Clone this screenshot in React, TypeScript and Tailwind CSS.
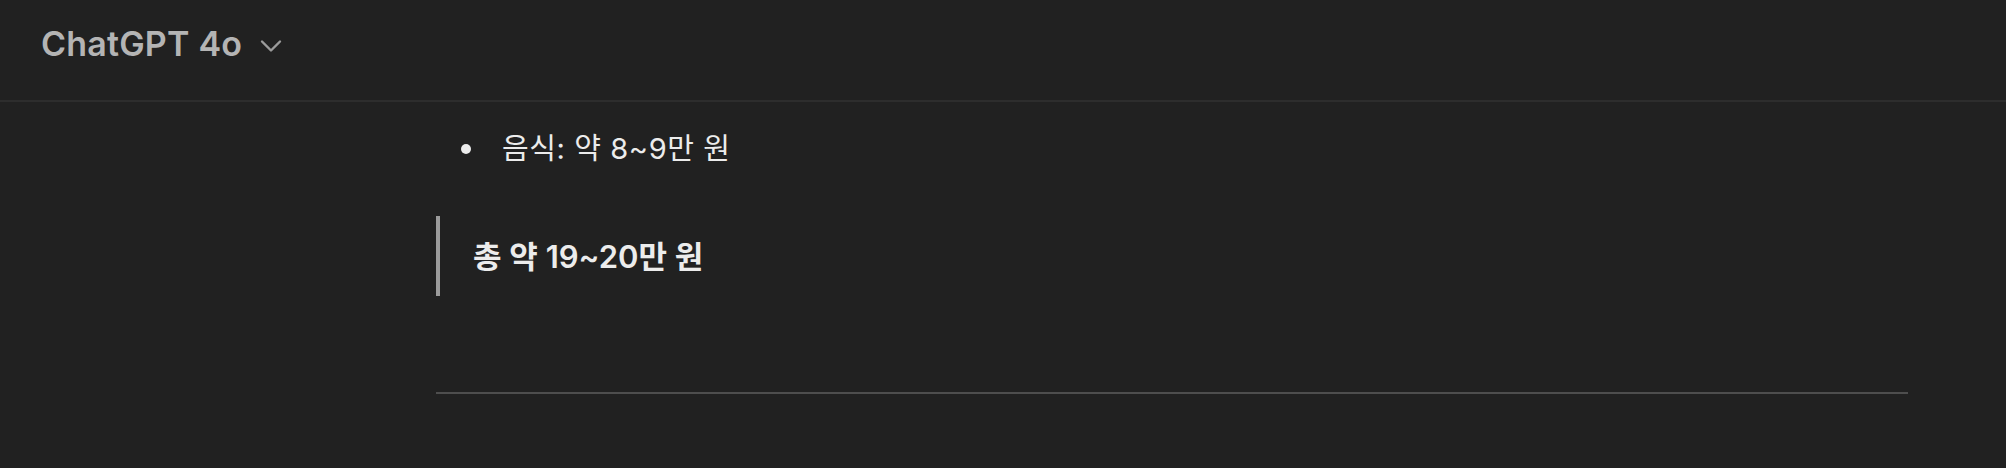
import React from "react";

export default function App() {
  const font = { fontFamily: 'Inter, "Noto Sans CJK KR", sans-serif' };
  return (
    <div className="w-[2006px] h-[468px] bg-[#212121] overflow-hidden" style={font}>
      <header className="h-[102px] border-b-2 border-[#2d2d2d] pl-[41px] pt-[27px] flex items-start">
        <div className="flex items-center gap-[18px]">
          <span className="text-[34px] leading-none font-semibold text-[#b4b4b4] tracking-[0.2px]">ChatGPT 4o</span>
          <svg width="22" height="14" viewBox="0 0 22 14" className="mt-[4px]">
            <path d="M2 2.5 L11 11.5 L20 2.5" fill="none" stroke="#9b9b9b" strokeWidth="2.4" strokeLinecap="round" strokeLinejoin="round" />
          </svg>
        </div>
      </header>
      <main className="pl-[436px] pr-[98px] pt-[26px]">
        <ul className="text-[29px] leading-[42px] text-[#ececec] tracking-[0.6px]">
          <li className="flex items-center">
            <span className="ml-[25px] w-[10px] h-[10px] rounded-full bg-[#ececec]" />
            <span className="ml-[31px]">음식: 약 8~9만 원</span>
          </li>
        </ul>
        <blockquote className="mt-[46px] h-[80px] border-l-4 border-[#9b9b9b] pl-[33px] flex items-center">
          <span className="text-[31px] font-semibold leading-none text-[#ececec]">총 약 19~20만 원</span>
        </blockquote>
        <hr className="mt-[96px] border-0 h-[2px] bg-[#4e4e4e]" />
      </main>
    </div>
  );
}
